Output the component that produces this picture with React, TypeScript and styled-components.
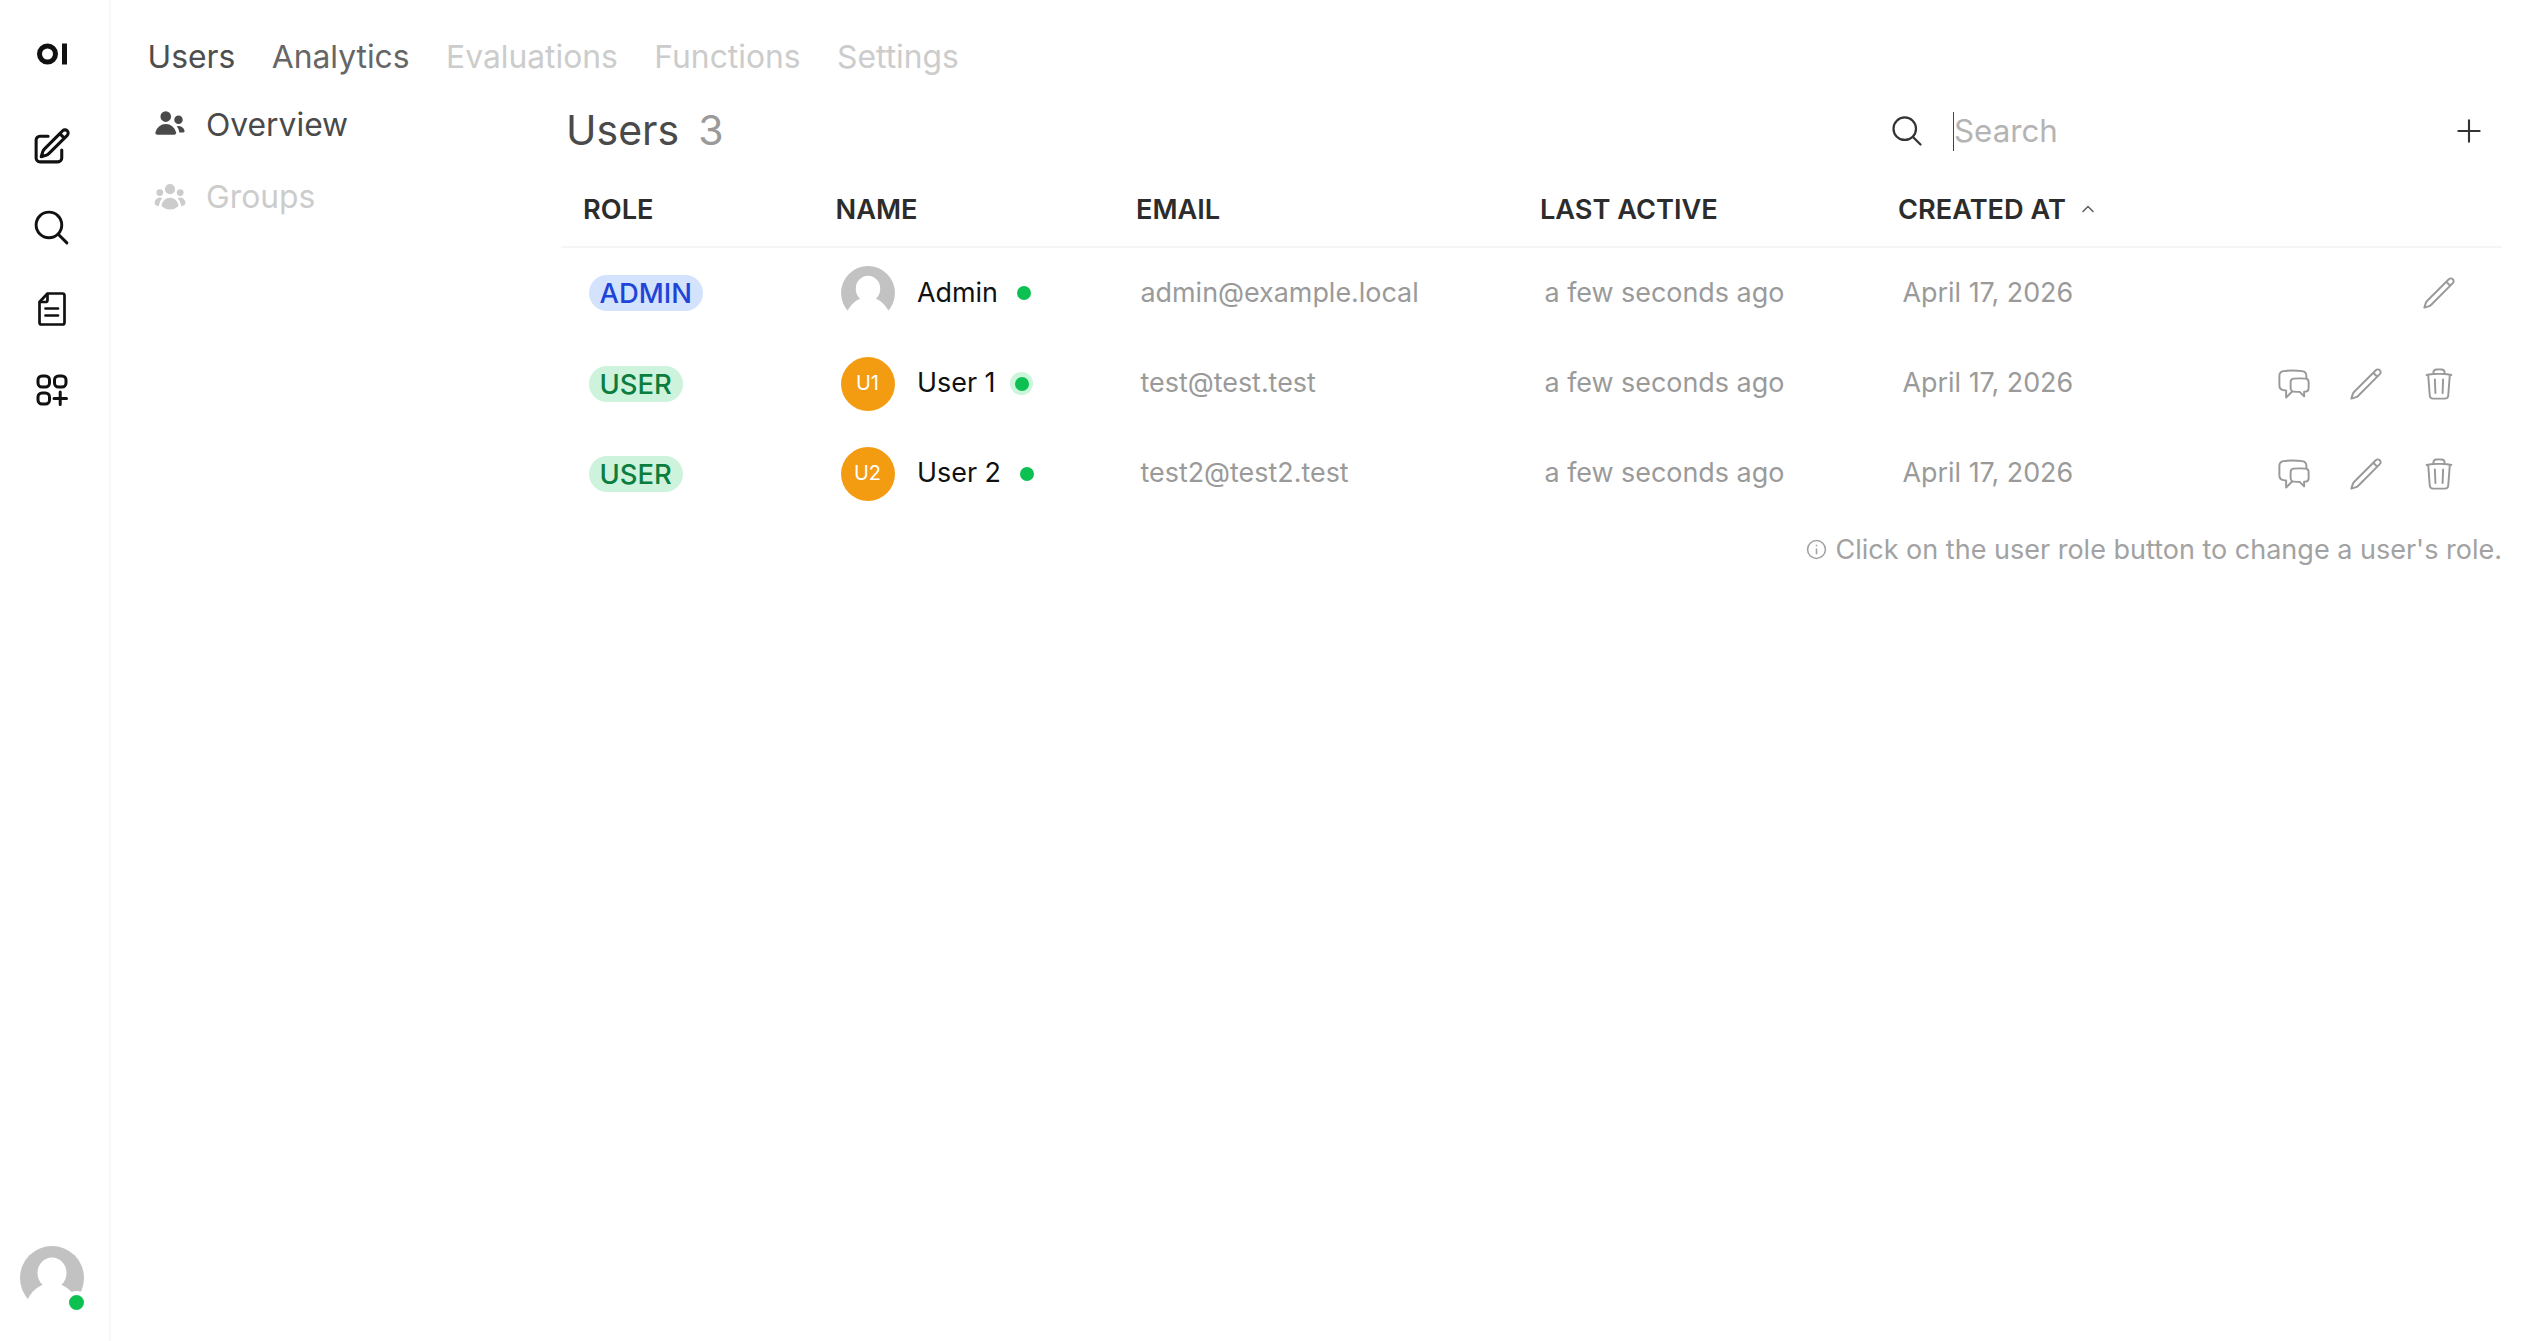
import React from "react";
import styled, { createGlobalStyle } from "styled-components";

const Global = createGlobalStyle`
  html, body { margin: 0; padding: 0; background: #fff; }
  body { font-family: Inter, "Noto Sans", sans-serif; color: #1a1a1a; }
  * { box-sizing: border-box; }
`;

const Page = styled.div`
  display: flex;
  width: 100%;
  height: 100vh;
  overflow: hidden;
`;

const Sidebar = styled.aside`
  width: 111px;
  flex: none;
  display: flex;
  flex-direction: column;
  align-items: center;
  border-right: 2px solid #f8f8f8;
  padding: 33px 6px 31px 0;
`;

const LogoBox = styled.div`
  height: 41px;
  margin-bottom: 32px;
  display: flex;
  align-items: center;
`;

const RailButton = styled.div`
  height: 81.2px;
  width: 100%;
  display: flex;
  align-items: center;
  justify-content: center;
  color: #111;
`;

const RailAvatar = styled.div`
  margin-top: auto;
  position: relative;
  width: 64px;
  height: 64px;
`;

const RailDot = styled.span`
  position: absolute;
  right: -4px;
  bottom: -4px;
  width: 23px;
  height: 23px;
  border-radius: 50%;
  background: #0cc152;
  border: 4px solid #fff;
`;

const Main = styled.main`
  flex: 1;
  min-width: 0;
  display: flex;
  flex-direction: column;
  padding: 35px 46px 0 36.5px;
`;

const Tabs = styled.nav`
  display: flex;
  gap: 36.5px;
  height: 44px;
  align-items: center;
  margin-bottom: 9px;
`;

const Tab = styled.span<{ $state: "active" | "mid" | "off" }>`
  font-size: 31.8px;
  line-height: 44px;
  color: ${(p) => (p.$state === "active" ? "#4e4e4e" : p.$state === "mid" ? "#666" : "#ccc")};
`;

const Body = styled.div`
  flex: 1;
  display: flex;
`;

const SubNav = styled.div`
  width: 413.5px;
  flex: none;
  display: flex;
  flex-direction: column;
`;

const SubItem = styled.div<{ $on?: boolean }>`
  height: 72px;
  display: flex;
  align-items: center;
  gap: 19px;
  padding-left: 5.5px;
  font-size: 31.8px;
  color: ${(p) => (p.$on ? "#4a4a4a" : "#ccc")};
`;

const Content = styled.section`
  flex: 1;
  min-width: 0;
`;

const TitleRow = styled.div`
  height: 86px;
  display: flex;
  align-items: center;
`;

const Title = styled.h1`
  margin: -2px 0 0 5px;
  font-size: 41px;
  font-weight: 400;
  color: #4a4a4a;
  display: flex;
  gap: 19px;
  flex: 1;
`;

const Count = styled.span`
  color: #9a9a9a;
`;

const SearchButton = styled.div`
  color: #333;
  margin-right: 28px;
  display: flex;
`;

const SearchField = styled.div`
  width: 500px;
  height: 39px;
  border-left: 1.5px solid #444;
  font-size: 31.3px;
  line-height: 38px;
  color: #b4b4b4;
`;

const AddButton = styled.div`
  width: 34px;
  height: 34px;
  color: #333;
  display: flex;
  align-items: center;
  justify-content: center;
  margin-left: -1px;
  margin-right: 16px;
`;

const Grid = styled.div`
  display: grid;
  grid-template-columns: 252.5px 300.5px 404px 358px 1fr;
`;

const Head = styled(Grid)`
  height: 74px;
  align-items: center;
  border-bottom: 2px solid #f5f5f5;
  padding-left: 22px;
  font-size: 27.2px;
  font-weight: 600;
  color: #2c2c2c;
  text-transform: uppercase;
  line-height: 1;
  padding-bottom: 1px;
`;

const HeadCell = styled.div`
  display: flex;
  align-items: center;
  gap: 14px;
`;

const Row = styled(Grid)`
  height: 90.4px;
  align-items: center;
  padding-left: 22px;
  font-size: 26.9px;
  color: #9a9a9a;
`;

const RoleCell = styled.div`
  padding-left: 4.5px;
  display: flex;
  align-items: center;
`;

const TextCell = styled.div`
  padding-left: 4.5px;
  padding-bottom: 3px;
`;

const DateCell = styled.div`
  padding-left: 4.5px;
  display: flex;
  align-items: center;
  justify-content: space-between;
`;

const DateText = styled.span`
  padding-bottom: 3px;
`;

const Badge = styled.span<{ $role: "admin" | "user" }>`
  height: 36px;
  padding: 0 11px;
  border-radius: 18px;
  display: inline-flex;
  align-items: center;
  font-size: 27.4px;
  font-weight: 500;
  margin-left: 1px;
  background: ${(p) => (p.$role === "admin" ? "#d3e3fe" : "#cdf3dc")};
  color: ${(p) => (p.$role === "admin" ? "#1e44d8" : "#0a7d3f")};
`;

const NameCell = styled.div`
  display: flex;
  align-items: center;
  padding-left: 5px;
  gap: 22.5px;
  color: #111;
`;

const NameText = styled.span`
  padding-bottom: 3px;
`;

const InitialAvatar = styled.div`
  width: 54px;
  height: 54px;
  padding-bottom: 2px;
  border-radius: 50%;
  background: #f39c12;
  color: #fff;
  display: flex;
  align-items: center;
  justify-content: center;
  font-size: 20px;
  font-weight: 400;
  flex: none;
`;

const Status = styled.span<{ $halo?: boolean }>`
  width: 23px;
  height: 23px;
  margin-left: -8px;
  border-radius: 50%;
  display: flex;
  align-items: center;
  justify-content: center;
  background: ${(p) => (p.$halo ? "#ccf5dc" : "transparent")};
  &::after {
    content: "";
    width: 14px;
    height: 14px;
    border-radius: 50%;
    background: #0cc152;
  }
`;

const Actions = styled.div`
  display: flex;
  justify-content: flex-end;
  gap: 36.7px;
  color: #999;
  padding-right: 45px;
`;

const Note = styled.div`
  display: flex;
  justify-content: flex-end;
  align-items: center;
  gap: 8px;
  margin-top: 17px;
  height: 26px;
  font-size: 27px;
  color: #a2a2a2;
`;

const Logo = () => (
  <svg width="30" height="24" viewBox="0 0 30 24" aria-hidden>
    <circle cx="10.5" cy="12" r="8" fill="none" stroke="#111" strokeWidth="5" />
    <rect x="25" y="1.5" width="5" height="21" fill="#111" />
  </svg>
);

const Outline = ({ d, size, width = 1.5 }: { d: string; size: number; width?: number }) => (
  <svg width={size} height={size} viewBox="0 0 24 24" fill="none" stroke="currentColor" strokeWidth={width} strokeLinecap="round" strokeLinejoin="round" aria-hidden>
    <path d={d} />
  </svg>
);

const PENCIL_SQUARE = "m16.862 4.487 1.687-1.688a1.875 1.875 0 1 1 2.652 2.652L10.582 16.07a4.5 4.5 0 0 1-1.897 1.13L6 18l.8-2.685a4.5 4.5 0 0 1 1.13-1.897l8.932-8.931Zm0 0L19.5 7.125M18 14v4.75A2.25 2.25 0 0 1 15.75 21H5.25A2.25 2.25 0 0 1 3 18.75V8.25A2.25 2.25 0 0 1 5.25 6H10";
const SEARCH = "m21 21-5.197-5.197m0 0A7.5 7.5 0 1 0 5.196 5.196a7.5 7.5 0 0 0 10.607 10.607Z";
const PENCIL = "m16.862 4.487 1.687-1.688a1.875 1.875 0 1 1 2.652 2.652L6.832 19.82a4.5 4.5 0 0 1-1.897 1.13l-2.685.8.8-2.685a4.5 4.5 0 0 1 1.13-1.897L16.863 4.487Zm0 0L19.5 7.125";
const TRASH = "m14.74 9-.346 9m-4.788 0L9.26 9m9.968-3.21c.342.052.682.107 1.022.166m-1.022-.165L18.16 19.673a2.25 2.25 0 0 1-2.244 2.077H8.084a2.25 2.25 0 0 1-2.244-2.077L4.772 5.79m14.456 0a48.108 48.108 0 0 0-3.478-.397m-12 .562c.34-.059.68-.114 1.022-.165m0 0a48.11 48.11 0 0 1 3.478-.397m7.5 0v-.916c0-1.18-.91-2.164-2.09-2.201a51.964 51.964 0 0 0-3.32 0c-1.18.037-2.09 1.022-2.09 2.201v.916m7.5 0a48.667 48.667 0 0 0-7.5 0";
const CHAT = "M20.25 8.511c.884.284 1.5 1.128 1.5 2.097v4.286c0 1.136-.847 2.1-1.98 2.193-.34.027-.68.052-1.02.072v3.091l-3-3c-1.354 0-2.694-.055-4.02-.163a2.115 2.115 0 0 1-.825-.242m9.345-8.334a2.126 2.126 0 0 0-.476-.095 48.64 48.64 0 0 0-8.048 0c-1.131.094-1.976 1.057-1.976 2.192v4.286c0 .837.46 1.58 1.155 1.951m9.345-8.334V6.637c0-1.621-1.152-3.026-2.76-3.235A48.455 48.455 0 0 0 11.25 3c-2.115 0-4.198.137-6.24.402-1.608.209-2.76 1.614-2.76 3.235v6.226c0 1.621 1.152 3.026 2.76 3.235.577.075 1.157.14 1.74.194V21l4.155-4.155";

const DocIcon = () => (
  <svg width="28" height="34" viewBox="0 0 28 34" fill="none" stroke="currentColor" strokeWidth="2.7" strokeLinecap="round" strokeLinejoin="round" aria-hidden>
    <path d="M9.5 1.5H24.5a2 2 0 0 1 2 2V30.5a2 2 0 0 1-2 2H3.5a2 2 0 0 1-2-2V10Z" />
    <path d="M9.5 2V8a2 2 0 0 1-2 2H2" />
    <path d="M7.5 16.5H20M7.5 23.5H20" />
  </svg>
);

const AppsIcon = () => (
  <svg width="32" height="32" viewBox="0 0 32 32" fill="none" stroke="currentColor" strokeWidth="3" strokeLinecap="round" strokeLinejoin="round" aria-hidden>
    <rect x="2" y="2" width="11.5" height="11" rx="4" />
    <rect x="18.5" y="2" width="11.5" height="11" rx="4" />
    <rect x="2" y="19" width="11.5" height="11" rx="4" />
    <path d="M24.2 18V30.5M18 24.5H30.5" />
  </svg>
);

const UsersSolid = () => (
  <svg width="34" height="34" viewBox="0 0 16 16" fill="currentColor" aria-hidden>
    <path d="M8.5 4.5a2.5 2.5 0 1 1-5 0 2.5 2.5 0 0 1 5 0ZM10.9 12.006c.11.542-.348.994-.9.994H2c-.553 0-1.01-.452-.902-.994a5.002 5.002 0 0 1 9.803 0ZM14.002 12h-1.59a2.556 2.556 0 0 0-.04-.29 6.476 6.476 0 0 0-1.167-2.603 3.002 3.002 0 0 1 3.633 1.911c.18.522-.283.982-.836.982ZM12 8a2 2 0 1 0 0-4 2 2 0 0 0 0 4Z" />
  </svg>
);

const GroupSolid = () => (
  <svg width="34" height="34" viewBox="0 0 20 20" fill="currentColor" aria-hidden>
    <path d="M10 9a3 3 0 100-6 3 3 0 000 6zM6 8a2 2 0 11-4 0 2 2 0 014 0zM1.49 15.326a.78.78 0 01-.358-.442 3 3 0 014.308-3.516 6.484 6.484 0 00-1.905 3.959c-.023.222-.014.442.025.654a4.97 4.97 0 01-2.07-.655zM16.44 15.98a4.97 4.97 0 002.07-.654.78.78 0 00.357-.442 3 3 0 00-4.308-3.517 6.484 6.484 0 011.907 3.96 2.32 2.32 0 01-.026.654zM18 8a2 2 0 11-4 0 2 2 0 014 0zM5.304 16.19a.844.844 0 01-.277-.71 5 5 0 019.947 0 .843.843 0 01-.277.71A6.975 6.975 0 0110 18a6.974 6.974 0 01-4.696-1.81z" />
  </svg>
);

const DefaultAvatar = ({ size }: { size: number }) => (
  <svg width={size} height={size} viewBox="0 0 64 64" aria-hidden>
    <circle cx="32" cy="32" r="32" fill="#c2c2c2" />
    <ellipse cx="32" cy="27" rx="14.5" ry="15.5" fill="#fff" />
    <ellipse cx="32" cy="66" rx="27" ry="29" fill="#fff" />
  </svg>
);

const InfoIcon = () => (
  <svg width="21" height="21" viewBox="0 0 20 20" fill="none" stroke="currentColor" strokeWidth="1.5" aria-hidden>
    <circle cx="10" cy="10" r="8.5" />
    <path d="M10 9v5.5M10 5.5v1.4" />
  </svg>
);

type User = { role: "admin" | "user"; name: string; initials?: string; email: string; halo?: boolean };

const users: User[] = [
  { role: "admin", name: "Admin", email: "admin@example.local" },
  { role: "user", name: "User 1", initials: "U1", email: "test@test.test", halo: true },
  { role: "user", name: "User 2", initials: "U2", email: "test2@test2.test" },
];

export default function App() {
  return (
    <Page>
      <Global />
      <Sidebar>
        <LogoBox><Logo /></LogoBox>
        <RailButton><Outline d={PENCIL_SQUARE} size={41} width={1.8} /></RailButton>
        <RailButton><Outline d={SEARCH} size={41} width={1.7} /></RailButton>
        <RailButton><DocIcon /></RailButton>
        <RailButton><AppsIcon /></RailButton>
        <RailAvatar>
          <DefaultAvatar size={64} />
          <RailDot />
        </RailAvatar>
      </Sidebar>
      <Main>
        <Tabs>
          <Tab $state="active">Users</Tab>
          <Tab $state="mid">Analytics</Tab>
          <Tab $state="off">Evaluations</Tab>
          <Tab $state="off">Functions</Tab>
          <Tab $state="off">Settings</Tab>
        </Tabs>
        <Body>
          <SubNav>
            <SubItem $on><UsersSolid />Overview</SubItem>
            <SubItem><GroupSolid />Groups</SubItem>
          </SubNav>
          <Content>
            <TitleRow>
              <Title>Users<Count>3</Count></Title>
              <SearchButton><Outline d={SEARCH} size={36} /></SearchButton>
              <SearchField>Search</SearchField>
              <AddButton><Outline d="M12 4.5v15m7.5-7.5h-15" size={34} /></AddButton>
            </TitleRow>
            <Head>
              <HeadCell>Role</HeadCell>
              <HeadCell>Name</HeadCell>
              <HeadCell>Email</HeadCell>
              <HeadCell>Last Active</HeadCell>
              <HeadCell>
                Created at
                <svg width="16" height="16" viewBox="0 0 16 16" fill="none" stroke="#555" strokeWidth="1.4" strokeLinecap="round" strokeLinejoin="round" aria-hidden>
                  <path d="M3 10.5 8 5.5l5 5" />
                </svg>
              </HeadCell>
            </Head>
            {users.map((u) => (
              <Row key={u.name}>
                <RoleCell><Badge $role={u.role}>{u.role.toUpperCase()}</Badge></RoleCell>
                <NameCell>
                  {u.initials ? <InitialAvatar>{u.initials}</InitialAvatar> : <DefaultAvatar size={54} />}
                  <NameText>{u.name}</NameText>
                  <Status $halo={u.halo} />
                </NameCell>
                <TextCell>{u.email}</TextCell>
                <TextCell>a few seconds ago</TextCell>
                <DateCell>
                  <DateText>April 17, 2026</DateText>
                  <Actions>
                    {u.role === "user" && <Outline d={CHAT} size={36} width={1.3} />}
                    <Outline d={PENCIL} size={36} width={1.3} />
                    {u.role === "user" && <Outline d={TRASH} size={36} width={1.3} />}
                  </Actions>
                </DateCell>
              </Row>
            ))}
            <Note><InfoIcon />Click on the user role button to change a user's role.</Note>
          </Content>
        </Body>
      </Main>
    </Page>
  );
}
